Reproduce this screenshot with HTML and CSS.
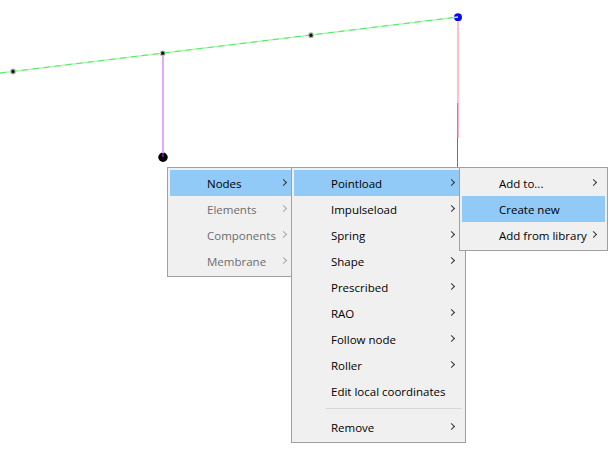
FILE: index.html
```html
<!DOCTYPE html>
<html lang="en">
<head>
<meta charset="utf-8">
<title>Context menu</title>
<link rel="stylesheet" href="styles.css">
</head>
<body>
<svg class="canvas" width="615" height="451" viewBox="0 0 615 451">
  <circle cx="13" cy="71.5" r="2.9" fill="#aaa"/>
  <circle cx="162.7" cy="53.3" r="2.9" fill="#aaa"/>
  <circle cx="311" cy="35.2" r="2.9" fill="#aaa"/>
  <circle cx="458" cy="17.3" r="4" fill="#0a0af0"/>
  <circle cx="163" cy="157.3" r="4.7" fill="#000"/>
  <line x1="0" y1="73" x2="458" y2="17" stroke="#b4f5b4" stroke-width="1.4"/>
  <line x1="0" y1="73" x2="458" y2="17" stroke="#10e030" stroke-width="0.6" stroke-dasharray="6 5"/>
  <line x1="163" y1="55" x2="163" y2="153" stroke="#e2a8ff" stroke-width="2"/>
  <line x1="163" y1="153" x2="163" y2="157" stroke="#a020c0" stroke-width="1.4"/>
  <line x1="458" y1="21" x2="458" y2="103" stroke="#ffc0cb" stroke-width="2"/>
  <line x1="458" y1="103" x2="458" y2="138" stroke="#ffb0c4" stroke-width="2"/>
  <line x1="457.5" y1="103" x2="457.5" y2="138" stroke="#f06a92" stroke-width="1"/>
  <line x1="457.5" y1="138" x2="457.5" y2="167" stroke="#e83a70" stroke-width="1"/>
  <circle cx="13" cy="71.5" r="1.7" fill="#111"/>
  <circle cx="162.7" cy="53.3" r="1.7" fill="#111"/>
  <circle cx="311" cy="35.2" r="1.7" fill="#111"/>
</svg>

<div class="menu menu-main">
  <div class="item active"><span class="label">Nodes</span><span class="chev"></span></div>
  <div class="item muted"><span class="label">Elements</span><span class="chev"></span></div>
  <div class="item muted"><span class="label">Components</span><span class="chev"></span></div>
  <div class="item muted"><span class="label">Membrane</span><span class="chev"></span></div>
</div>

<div class="menu menu-nodes">
  <div class="item active"><span class="label">Pointload</span><span class="chev"></span></div>
  <div class="item"><span class="label">Impulseload</span><span class="chev"></span></div>
  <div class="item"><span class="label">Spring</span><span class="chev"></span></div>
  <div class="item"><span class="label">Shape</span><span class="chev"></span></div>
  <div class="item"><span class="label">Prescribed</span><span class="chev"></span></div>
  <div class="item"><span class="label">RAO</span><span class="chev"></span></div>
  <div class="item"><span class="label">Follow node</span><span class="chev"></span></div>
  <div class="item"><span class="label">Roller</span><span class="chev"></span></div>
  <div class="item"><span class="label">Edit local coordinates</span></div>
  <div class="separator"></div>
  <div class="item"><span class="label">Remove</span><span class="chev"></span></div>
</div>

<div class="menu menu-pointload">
  <div class="item"><span class="label">Add to...</span><span class="chev"></span></div>
  <div class="item active"><span class="label">Create new</span></div>
  <div class="item"><span class="label">Add from library</span><span class="chev"></span></div>
</div>
</body>
</html>
```
FILE: styles.css
```css
html, body {
  margin: 0;
  padding: 0;
  background: #ffffff;
  width: 615px;
  height: 451px;
  overflow: hidden;
}
body {
  position: relative;
  font-family: "Open Sans", "Noto Sans", sans-serif;
  font-size: 11.5px;
  color: #000;
}
.canvas {
  display: block;
}
.menu {
  position: absolute;
  box-sizing: border-box;
  background: #f0f0f0;
  border: 1px solid #a0a0a0;
  padding: 2px;
}
.menu-main {
  left: 167px;
  top: 167px;
  width: 131px;
  height: 110px;
}
.menu-nodes {
  left: 291px;
  top: 167px;
  width: 175px;
  height: 276px;
}
.menu-pointload {
  left: 459px;
  top: 167px;
  width: 149px;
  height: 84px;
}
.item {
  height: 26px;
  display: flex;
  align-items: center;
  padding-left: 37px;
  position: relative;
}
.active {
  background: #91c9f7;
}
.muted {
  color: #6d6d6d;
}
.label {
  white-space: nowrap;
}
.chev {
  position: absolute;
  right: 9px;
  top: 10px;
  width: 4px;
  height: 4px;
  border-top: 1px solid #333;
  border-right: 1px solid #333;
  transform: rotate(45deg);
}
.muted .chev {
  border-color: #a8a8a8;
}
.separator {
  height: 1px;
  background: #d7d7d7;
  margin: 4px 1px 5px 32px;
}
```
